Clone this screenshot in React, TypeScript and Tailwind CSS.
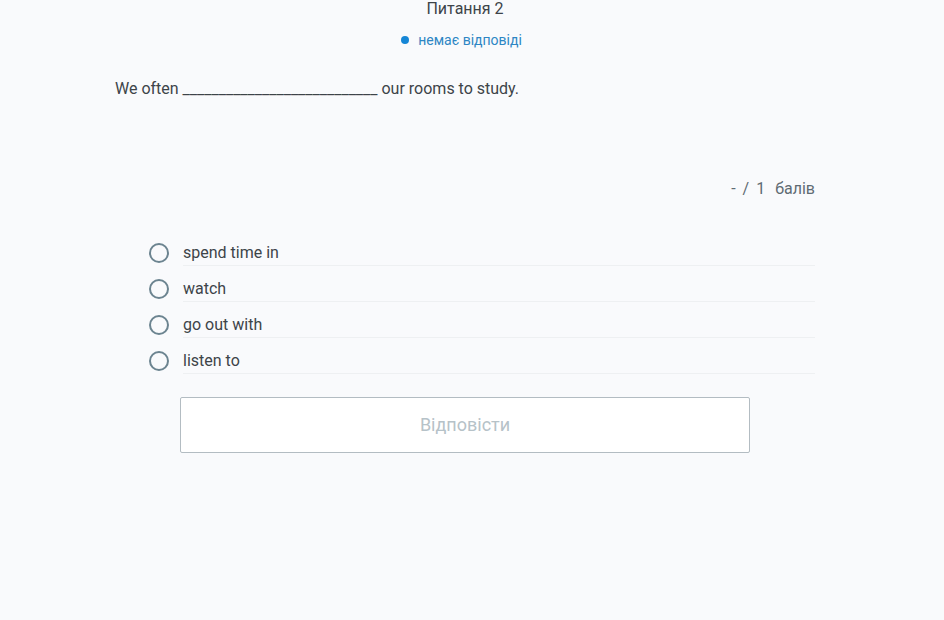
import { useState } from 'react';

const options = ['spend time in', 'watch', 'go out with', 'listen to'];

export default function App() {
  const [selected, setSelected] = useState<number | null>(null);

  return (
    <div
      className="min-h-[620px] bg-[#f9fafc] text-[#3d4449]"
      style={{ fontFamily: 'Roboto, "Noto Sans", sans-serif' }}
    >
      <div className="w-[700px] ml-[115px]">
        {/* Header */}
        <div className="text-center text-[16px] leading-[18px] text-[#3d4449]">Питання 2</div>
        <div className="flex items-center justify-center gap-[9px] mt-[13px] mr-[7px] text-[14px] leading-[18px] text-[#2d86c4]">
          <span className="w-[8px] h-[8px] rounded-full bg-[#1586d6]" />
          <span>немає відповіді</span>
        </div>

        {/* Question */}
        <p className="mt-[30px] text-[16px] leading-[20px]">
          We often ___________________________ our rooms to study.
        </p>

        {/* Score */}
        <div className="mt-[80px] flex justify-end gap-[7px] text-[16px] leading-[20px] text-[#5f6b73]">
          <span>-</span>
          <span>/</span>
          <span>1</span>
          <span className="ml-[3px]">балів</span>
        </div>

        {/* Options */}
        <div className="mt-[31px] ml-[34px]">
          {options.map((opt, i) => (
            <label key={opt} className="flex h-[36px] cursor-pointer" onClick={() => setSelected(i)}>
              <span className="self-end mb-[3px] w-[20px] h-[20px] rounded-full border-2 border-[#6c8490] flex items-center justify-center shrink-0">
                {selected === i && <span className="w-[10px] h-[10px] rounded-full bg-[#6c8490]" />}
              </span>
              <span className="ml-[14px] flex-1 h-full flex items-end border-b border-[#eef0f2] text-[16px] leading-[24px]">
                {opt}
              </span>
            </label>
          ))}
        </div>

        {/* Submit */}
        <div className="mt-[23px] ml-[65px]">
          <button className="w-[570px] h-[56px] pb-[2px] bg-white border border-[#b3bcc2] rounded-[2px] text-[18px] text-[#b6c2c8]">
            Відповісти
          </button>
        </div>
      </div>
    </div>
  );
}
